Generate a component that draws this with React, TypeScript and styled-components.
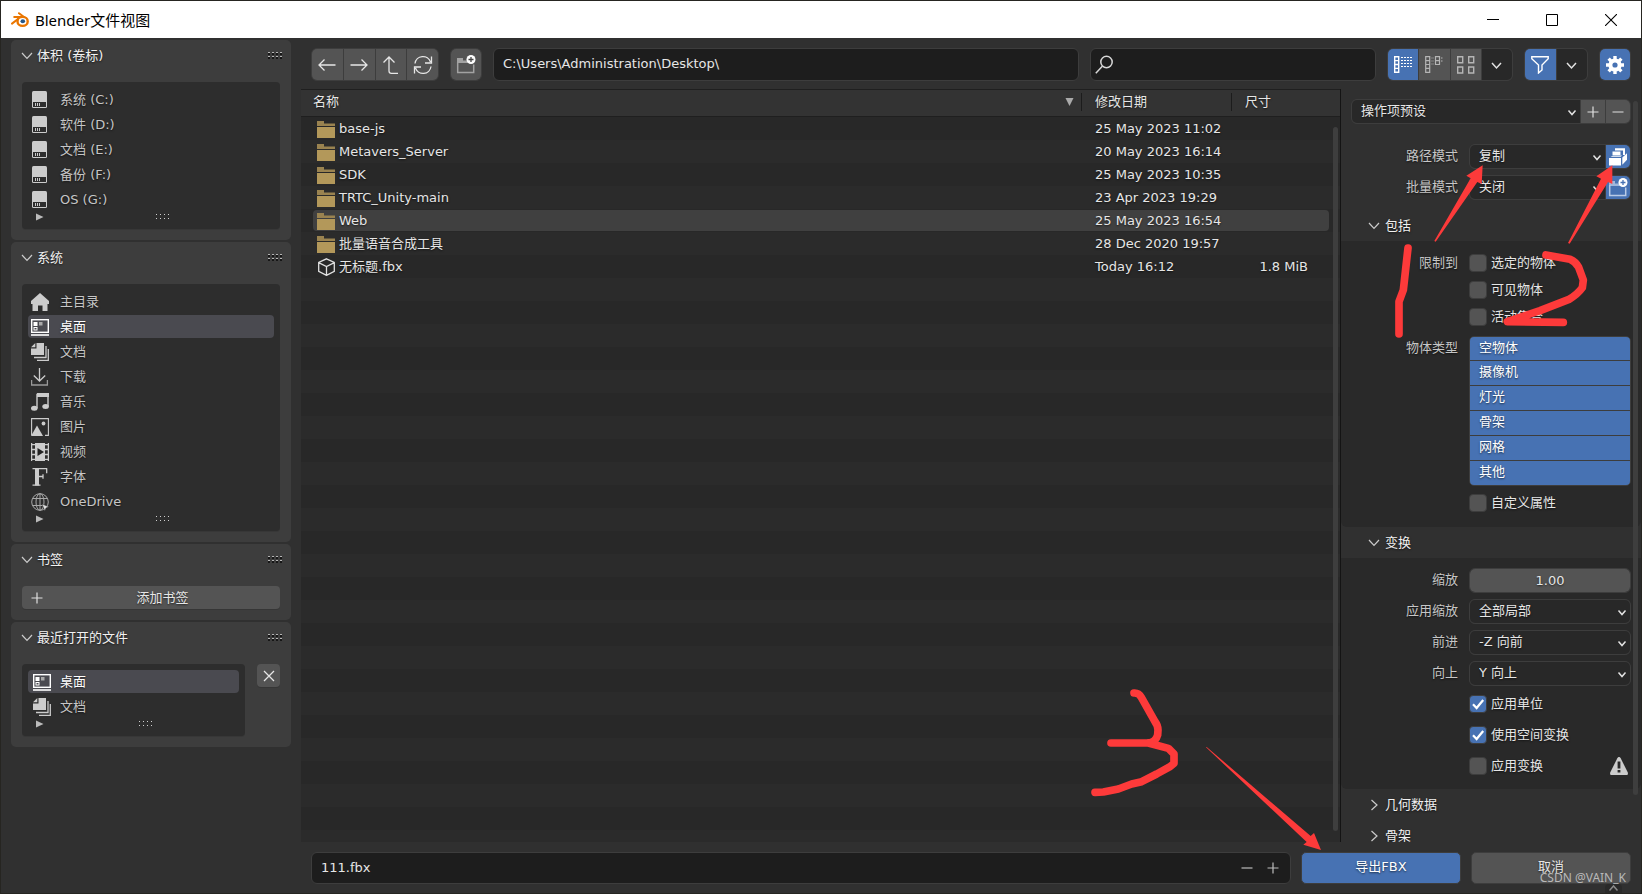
import React from "react";
import styled, { createGlobalStyle, css } from "styled-components";

const c = {
  bg: "#303030",
  panel: "#3d3d3d",
  list: "#2d2d2d",
  sub: "#292929",
  outline: "#3d3d3d",
  button: "#545454",
  field: "#1d1d1d",
  menu: "#282828",
  blue: "#4772b3",
  text: "#e6e6e6",
  dim: "#c6c6c6",
  mark: "#fd3a3a",
};

const GlobalStyle = createGlobalStyle`
  * { box-sizing: border-box; }
  body {
    margin: 0;
    background: ${c.bg};
    overflow: hidden;
  }
  body, button, input, select, table {
    font-family: "DejaVu Sans", "Noto Sans CJK SC", sans-serif;
    font-size: 13px;
    line-height: 20px;
    color: ${c.text};
  }
  button, input, select { border: 0; padding: 0; margin: 0; border-radius: 0; }
  ul { list-style: none; margin: 0; padding: 0; }
`;

const shadow = css`
  text-shadow: 0 1px 2px rgba(0, 0, 0, 0.6);
`;

const Window = styled.div`
  position: relative;
  display: flex;
  flex-direction: column;
  height: 100vh;
  padding: 1px;
  background: #262521;
`;

const TitleBar = styled.header`
  display: flex;
  align-items: center;
  flex: 0 0 37px;
  padding: 0 1px 0 10px;
  background: #fff;
`;

const Title = styled.h1`
  flex: 1;
  margin: 0 0 0 6px;
  font: 400 15px/20px "Noto Sans", "Noto Sans CJK SC", sans-serif;
  color: #000;
`;

const CaptionButton = styled.button`
  display: flex;
  align-items: center;
  justify-content: center;
  width: 59px;
  height: 36px;
  background: none;
`;

const Body = styled.div`
  display: flex;
  flex: 1;
  min-height: 0;
  background: ${c.bg};
`;

const Sidebar = styled.aside`
  display: flex;
  flex-direction: column;
  gap: 2px;
  flex: 0 0 300px;
  padding: 2px 10px;
`;

const Panel = styled.section`
  padding: 0 11px 11px;
  border-radius: 5px;
  background: ${c.panel};
`;

const PanelHeader = styled.button`
  display: flex;
  align-items: center;
  width: 100%;
  height: 32px;
  margin-bottom: 10px;
  padding: 0;
  background: none;
  color: #f2f2f2;
  ${shadow}
  span { flex: 1; margin-left: 4px; text-align: left; }
  svg:first-child { margin-left: -1px; }
  svg:last-child { margin-right: -3px; }
`;

const ListBox = styled.div`
  flex: 1;
  padding: 5px 6px 0;
  border-radius: 4px;
  background: ${c.list};
  box-shadow: 0 1px 0 #373737;
  li { padding: 1px 0; }
`;

const Place = styled.button<{ $active?: boolean; $inset?: boolean }>`
  display: flex;
  align-items: center;
  gap: ${(p) => (p.$inset ? 9 : 11)}px;
  width: 100%;
  height: 23px;
  padding-left: ${(p) => (p.$inset ? 5 : 3)}px;
  border-radius: 4px;
  background: ${(p) => (p.$active ? "#4a4a50" : "none")};
  color: ${(p) => (p.$active ? "#fff" : c.dim)};
  ${shadow}
`;

const ListFooter = styled.div`
  display: grid;
  grid-template-columns: 24px 1fr;
  justify-items: center;
  align-items: start;
  height: 17px;
  padding-top: 1px;
`;

const SplitRow = styled.div`
  display: flex;
  align-items: flex-start;
  gap: 12px;
`;

const AddBookmark = styled.button`
  display: grid;
  grid-template-columns: 22px 1fr;
  align-items: center;
  width: 100%;
  height: 23px;
  padding: 0 8px 0 9px;
  border-radius: 4px;
  background: ${c.button};
  box-shadow: 0 1px 0 #363636;
  ${shadow}
`;

const ClearButton = styled.button`
  display: flex;
  align-items: center;
  justify-content: center;
  width: 23px;
  height: 23px;
  border-radius: 4px;
  background: ${c.button};
  box-shadow: 0 1px 0 #363636;
`;

const Main = styled.main`
  display: flex;
  flex-direction: column;
  flex: 1;
  min-width: 0;
`;

const Toolbar = styled.div`
  display: flex;
  gap: 11px;
  flex: 0 0 51px;
  padding: 10px 10px 0;
`;

const Group = styled.div<{ $width?: number; $height?: number }>`
  display: flex;
  gap: 1px;
  ${(p) => p.$width && `flex: 0 0 ${p.$width}px;`}
  height: ${(p) => p.$height ?? 33}px;
  border: 1px solid ${c.outline};
  border-radius: 6px;
  background: ${c.outline};
  overflow: hidden;
`;

const Tool = styled.button<{ $tone?: "blue" | "menu"; $width?: number }>`
  display: flex;
  align-items: center;
  justify-content: center;
  flex: ${(p) => (p.$width ? `0 0 ${p.$width}px` : "1")};
  background: ${(p) => (p.$tone === "blue" ? c.blue : p.$tone === "menu" ? c.menu : c.button)};
`;

const TextBox = styled.div<{ $width?: number; $height?: number }>`
  display: flex;
  align-items: center;
  gap: 4px;
  flex: ${(p) => (p.$width ? `0 0 ${p.$width}px` : "1")};
  height: ${(p) => p.$height ?? 33}px;
  padding: 0 6px 0 4px;
  border: 1px solid ${c.outline};
  border-radius: 6px;
  background: ${c.field};
  input {
    flex: 1;
    min-width: 0;
    height: 28px;
    padding: 0 4px 2px 5px;
    background: none;
    outline: 0;
  }
`;

const StepButton = styled.button`
  display: flex;
  align-items: center;
  justify-content: center;
  width: 22px;
  height: 26px;
  background: none;
`;

const Middle = styled.div`
  display: flex;
  flex: 1;
  min-height: 0;
`;

const Files = styled.div`
  position: relative;
  flex: 1;
  min-width: 0;
  overflow: hidden;
  border-right: 1px solid #141414;
  background: repeating-linear-gradient(#282828 0 23px, #2b2b2b 23px 46px) 0 28px;
`;

const FileTable = styled.table`
  width: 100%;
  table-layout: fixed;
  border-collapse: separate;
  border-spacing: 0;
  ${shadow}
  th {
    height: 28px;
    padding: 0 0 2px;
    border-top: 1px solid #1f1f1f;
    border-bottom: 1px solid #1f1f1f;
    background: #333;
    font-weight: 400;
    text-align: left;
  }
  td { height: 23px; padding: 0; }
  td:first-child > div { display: flex; align-items: center; gap: 4px; padding-left: 16px; }
  td:nth-child(2) { padding-left: 14px; }
  td:nth-child(3) { padding-right: 32px; text-align: right; }
`;

const HeadCell = styled.div<{ $divided?: boolean }>`
  display: flex;
  align-items: center;
  justify-content: space-between;
  height: 18px;
  padding: 0 7px 0 ${(p) => (p.$divided ? 13 : 12)}px;
  border-left: ${(p) => (p.$divided ? "1px solid #1c1c1c" : "0")};
`;

const FileRow = styled.tr<{ $active?: boolean }>`
  position: relative;
  z-index: 0;
  ${(p) =>
    p.$active &&
    css`
      td:first-child::before {
        content: "";
        position: absolute;
        z-index: -1;
        inset: 1px 11px 1px 12px;
        border-radius: 4px;
        background: #404040;
      }
    `}
`;

const Thumb = styled.div<{ $top: number; $bottom: number; $right: number }>`
  position: absolute;
  top: ${(p) => p.$top}px;
  bottom: ${(p) => p.$bottom}px;
  right: ${(p) => p.$right}px;
  width: 5px;
  border-radius: 3px;
  background: #3e3e3e;
`;

const Settings = styled.aside`
  position: relative;
  flex: 0 0 300px;
  overflow: hidden;
`;

const Preset = styled.div`
  padding: 10px 10px 20px;
`;

const Fields = styled.div`
  display: flex;
  flex-direction: column;
  gap: 6px;
  padding-bottom: 10px;
`;

const FieldRow = styled.div`
  display: grid;
  grid-template-columns: 117px 1fr;
  column-gap: 11px;
  padding-right: 10px;
`;

const FieldLabel = styled.label`
  line-height: 24px;
  text-align: right;
  color: ${c.dim};
  ${shadow}
`;

const SelectWrap = styled.div`
  position: relative;
  display: flex;
  flex: 1;
  background: ${c.menu};
  select {
    flex: 1;
    min-width: 0;
    padding: 0 24px 1px 9px;
    appearance: none;
    background: none;
    outline: 0;
    ${shadow}
  }
  svg {
    position: absolute;
    right: 2px;
    top: 6px;
    pointer-events: none;
  }
`;

const NumberInput = styled.input`
  flex: 1;
  min-width: 0;
  background: ${c.button};
  text-align: center;
  ${shadow}
`;

const SectionHeader = styled.button`
  display: flex;
  align-items: center;
  gap: 5px;
  width: 100%;
  height: 31px;
  padding-left: 27px;
  background: none;
  color: #f0f0f0;
  ${shadow}
`;

const SectionBody = styled.div<{ $gap?: number }>`
  display: flex;
  flex-direction: column;
  gap: ${(p) => p.$gap ?? 0}px;
  padding: ${(p) => (p.$gap ? 10 : 9)}px 0 10px;
  border-radius: 0 0 6px 6px;
  background: ${c.sub};
`;

const CheckRow = styled.div<{ $height: number }>`
  display: grid;
  grid-template-columns: 117px 1fr 18px;
  column-gap: 11px;
  align-items: center;
  height: ${(p) => p.$height}px;
  padding: 0 13px 1px 0;
  > span { text-align: right; color: ${c.dim}; ${shadow} }
`;

const Check = styled.label`
  position: relative;
  display: flex;
  align-items: center;
  gap: 4px;
  white-space: nowrap;
  ${shadow}
  input {
    appearance: none;
    width: 18px;
    height: 18px;
    border: 1px solid ${c.outline};
    border-radius: 4px;
    background: ${c.button};
  }
  input:checked { background: ${c.blue}; }
  svg { position: absolute; left: 0; top: 1px; visibility: hidden; pointer-events: none; }
  input:checked + svg { visibility: visible; }
`;

const TypeRow = styled(FieldRow)`
  margin: 5px 0 4px;
`;

const TypeList = styled.div`
  display: flex;
  flex-direction: column;
  gap: 1px;
  border: 1px solid ${c.outline};
  border-radius: 5px;
  background: ${c.outline};
  overflow: hidden;
`;

const TypeButton = styled.button`
  height: 24px;
  padding: 0 0 2px 9px;
  background: ${c.blue};
  color: #fff;
  text-align: left;
  ${shadow}
  &:first-child { height: 23px; }
`;

const BottomBar = styled.footer`
  position: relative;
  display: flex;
  gap: 10px;
  flex: 0 0 51px;
  padding: 10px 10px 0;
`;

const ActionButton = styled.button<{ $primary?: boolean }>`
  flex: 0 0 160px;
  height: 32px;
  padding-bottom: 2px;
  border: 1px solid ${c.outline};
  border-radius: 5px;
  background: ${(p) => (p.$primary ? c.blue : c.button)};
  color: ${(p) => (p.$primary ? "#fff" : c.text)};
  ${shadow}
`;

const Watermark = styled.span`
  position: absolute;
  right: 15px;
  bottom: 5px;
  font: 400 12px/20px "Noto Sans", sans-serif;
  color: #b9b9b9;
`;

const CornerTab = styled.span`
  position: absolute;
  right: 19px;
  bottom: 0;
  display: flex;
  justify-content: center;
  width: 17px;
  height: 9px;
  border-radius: 4px 4px 0 0;
  background: #292929;
`;

const Marks = styled.svg<{ $right: number }>`
  position: absolute;
  right: ${(p) => p.$right}px;
  fill: ${c.mark};
  pointer-events: none;
  path { fill: none; stroke: ${c.mark}; stroke-width: 23; stroke-linecap: round; stroke-linejoin: round; }
`;
const TopMarks = styled(Marks)`top: 90px;`;
const BottomMarks = styled(Marks)`bottom: 0;`;

type IconProps = { children: React.ReactNode; size?: number; color?: string; w?: number; h?: number };
const Icon = ({ children, size = 18, color = "#cccccc", w, h }: IconProps) => (
  <svg width={w ?? size} height={h ?? size} viewBox={`0 0 ${w ?? size} ${h ?? size}`} fill="none" stroke={color} strokeWidth="1.3" aria-hidden="true">
    {children}
  </svg>
);

const BlenderLogo = () => (
  <Icon w={18} h={16}>
    <path d="M1 11.6 9.6 5H3.2M8 1.2l6 4.6" stroke="#ea7600" strokeWidth="2" strokeLinecap="round" />
    <ellipse cx="11.6" cy="9.4" rx="5.1" ry="4.5" fill="#fff" stroke="#ea7600" strokeWidth="2.4" />
    <ellipse cx="11.8" cy="9.2" rx="2.3" ry="2" fill="#265787" stroke="none" />
  </Icon>
);
const ChevronDown = () => <Icon w={12} h={8}><path d="m1 1 5 5.4L11 1" strokeWidth="1.2" /></Icon>;
const ChevronRight = () => <Icon w={12} h={12}><path d="m3.500 1 5.500 5-5.500 5" strokeWidth="1.2" /></Icon>;
const Caret = ({ size = 12 }: { size?: number }) => (
  <Icon size={size} color="#e2e2e2"><path d={size > 12 ? "m3 6 4.500 5L12 6" : "m2.500 4.500 3.500 4 3.500-4"} strokeWidth="1.5" /></Icon>
);
const Plus = ({ color = "#e0e0e0" }) => <Icon size={12} color={color}><path d="M6 .5v11M.5 6h11" strokeWidth="1.2" /></Icon>;
const Minus = ({ color = "#e0e0e0" }) => <Icon size={12} color={color}><path d="M.5 6h11" strokeWidth="1.2" /></Icon>;

const Grip = () => (
  <Icon w={16} h={8}>
    {[0, 4, 8, 12].flatMap((x) => [0, 4].map((y) => (
      <g key={`${x}-${y}`} stroke="none">
        <rect x={x + 1} y={y} width="2" height="1" fill="#b5b5b5" />
        <rect x={x + 1} y={y + 1} width="2" height="2" fill="#161616" />
      </g>
    )))}
  </Icon>
);
const FootGrip = () => (
  <Icon w={14} h={8}>
    {[0, 4, 8, 12].flatMap((x) => [1, 5].map((y) => (
      <rect key={`${x}-${y}`} x={x} y={y} width="1" height="1" fill="#d0d0d0" stroke="none" />
    )))}
  </Icon>
);

const Drive = () => (
  <Icon>
    <rect x="1" y="0" width="15" height="17" rx="1.5" fill="#ccc" stroke="none" />
    <path d="M2 11h13v5H2z" fill="#2d2d2d" stroke="none" />
    <path d="M4.500 12v3M6.500 12v3M8.500 12v3" strokeWidth="1" />
  </Icon>
);
const Home = () => (
  <Icon><path d="M9 0 0 8v3h1.500v7H7v-5.500h4.500V18h5v-7H18V8z" fill="#ccc" stroke="none" /></Icon>
);
const Desktop = () => (
  <Icon color="#fff">
    <rect x=".7" y="1.700" width="16.600" height="12.600" strokeWidth="1.4" />
    <path d="M0 17h18" strokeWidth="1.6" />
    <rect x="2.500" y="4" width="4" height="4" fill="#fff" stroke="none" />
    <rect x="8" y="4" width="3.500" height="3.500" fill="#aaa" stroke="none" />
    <rect x="3" y="9.500" width="3" height="2.500" strokeWidth="1" />
  </Icon>
);
const Documents = () => (
  <Icon>
    <path d="M5.500 0H13v12H0V5.500h5.500z" fill="#ccc" stroke="none" />
    <path d="M0 4.300 4.300 0v4.300z" fill="#ccc" stroke="none" />
    <path d="M15 3v11.500H3M17.300 6v11.300H6" strokeWidth="1.3" />
  </Icon>
);
const Download = () => (
  <Icon><path d="M8.500 0v13M2.800 7.500l5.700 5.500 5.700-5.500" /><path d="M.6 12v5h15.800v-5" stroke="#999" /></Icon>
);
const Music = () => (
  <Icon>
    <path d="M6 15V1.500h11V13" strokeWidth="1.4" />
    <path d="M6 0h12v4H6z" fill="#ccc" stroke="none" />
    <ellipse cx="3.300" cy="15.300" rx="3.300" ry="2.500" fill="#ccc" stroke="none" />
    <ellipse cx="14.600" cy="13.500" rx="3.300" ry="2.500" fill="#ccc" stroke="none" />
  </Icon>
);
const Picture = () => (
  <Icon>
    <path d="M.6 17.300V.6h16.800v16.800H14" strokeWidth="1.1" />
    <path d="M0 18 6 7.500 12 18z" fill="#ccc" stroke="none" />
    <circle cx="12.500" cy="5.500" r="1.900" fill="#ccc" stroke="none" />
  </Icon>
);
const Movie = () => (
  <Icon>
    <path d="M4 0h10v18H4z" fill="#ccc" stroke="none" />
    <path d="M.6 0v18M17.400 0v18M0 1.600h4M0 6.500h4M0 11.500h4M0 16.400h4M14 1.600h4M14 6.500h4M14 11.500h4M14 16.400h4" />
    <path d="m6.500 5 6.500 4-6.500 4z" fill="#222" stroke="none" />
  </Icon>
);
const FontIcon = () => (
  <Icon>
    <path d="M1.500.7H16M15.700.3v5M1.500 17.200h8M6 8.500h6M12 6.200v4.600" strokeWidth="1.300" />
    <path d="M4 .5h4v17H4z" fill="#ccc" stroke="none" />
  </Icon>
);
const Globe = () => (
  <Icon color="#a8a8a8">
    <circle cx="9" cy="9" r="8.300" strokeWidth="1" />
    <ellipse cx="9" cy="9" rx="4" ry="8.300" strokeWidth="1" />
    <path d="M1.500 5.500h15M1.500 12.500H13M9 .7v16.600" strokeWidth="1" />
    <path d="m11 11 7 2.800-3 1.200-1.200 3z" fill="#ddd" stroke="#2d2d2d" strokeWidth=".5" />
  </Icon>
);
const Folder = () => (
  <Icon>
    <path d="M0 1h7v2.500h11v2.500H0z" fill="#9a8350" stroke="none" />
    <path d="M0 7h18v11H0z" fill="#b3985a" stroke="none" />
  </Icon>
);
const Cube = () => (
  <Icon color="#e0e0e0"><path d="m9.500.8 7.800 3.600v9l-7.800 4-7.800-4v-9zM1.700 4.600l7.800 4 7.800-4M9.500 8.600v8.800" /></Icon>
);
const NewFolder = ({ dark = true }) => (
  <Icon size={20} color={dark ? "#a2a2a2" : "#b9cbe6"}>
    <path d="M1 3h6v2.500h5V8H1z" fill={dark ? "#a2a2a2" : "#9fb7dc"} stroke="none" />
    <path d="M1.700 7v10.500h16V9.500" strokeWidth="1.500" />
    <circle cx="15" cy="4.500" r="4.500" fill="#fff" stroke="none" />
    <path d="M15 2v5M12.500 4.500h5" stroke={dark ? "#444" : c.blue} strokeWidth="1.300" />
  </Icon>
);
const Magnifier = () => (
  <Icon size={20} color="#d8d8d8"><circle cx="11.500" cy="7" r="5.700" strokeWidth="1.500" /><path d="m7.300 11.200-6.500 7" strokeWidth="1.500" /></Icon>
);
const ViewList = () => (
  <Icon color="#fff">
    <path d="M.7.700h4v15.600h-4zM.7 4.600h4M.7 8.500h4M.7 12.400h4" strokeWidth="1.400" />
    <path d="M7 1.500h11M7 4.500h11M7 7.500h11M7 10.500h11" strokeWidth="1" strokeDasharray="2 1" />
  </Icon>
);
const ViewColumns = () => (
  <Icon color="#b5b5b5">
    <path d="M.7.700h4v15.600h-4zM.7 4.600h4M.7 8.500h4M.7 12.400h4M10.500.700h4v7.800h-4zM10.500 4.600h4" strokeWidth="1.200" />
    <path d="M6.500 2h2M6.500 5h2M6.500 8h2M16 2h2M16 5h2" strokeWidth="1" strokeDasharray="1 .5" />
  </Icon>
);
const ViewGrid = () => (
  <Icon color="#b5b5b5"><path d="M.7.700h5v6h-5zM11.700.700h5v6h-5zM.7 11h5v6h-5zM11.700 11h5v6h-5z" strokeWidth="1.400" /></Icon>
);
const Funnel = () => (
  <Icon color="#fff"><path d="M.8.800h16.400v2L11 9v5l-3.500 3V9L.8 2.800z" strokeWidth="1.400" /></Icon>
);
const Gear = () => (
  <Icon>
    <g stroke="#fff">
      <circle cx="9" cy="9" r="4.600" strokeWidth="4" />
      {[0, 45, 90, 135, 180, 225, 270, 315].map((a) => (
        <path key={a} d="M9 0v3.500" strokeWidth="3.400" transform={`rotate(${a} 9 9)`} />
      ))}
    </g>
  </Icon>
);
const CopyFiles = () => (
  <Icon>
    <g fill="#fff" stroke="none">
      <path d="M0 10h12v7.500H0zM1.500 8.700 4 7.500h9l-1.500 1.200zM3.500 3.500h8V7h-8zM6 .3h10V7h-2V2.500H6z" />
      <path d="m13.300 9.500 4.700-4.300v6.500l-4.700 5z" />
    </g>
  </Icon>
);
const Warning = () => (
  <Icon>
    <path d="M9 0c.9 0 1.300.6 1.700 1.300l7 14c.6 1.400 0 2.700-1.200 2.700h-15C.3 18-.3 16.700.3 15.300l7-14C7.700.6 8.100 0 9 0z" fill="#ccc" stroke="none" />
    <path d="M7.600 4.500h2.800v7H7.600zM7.600 13h2.800v2.500H7.600z" fill="#292929" stroke="none" />
  </Icon>
);
const PlayMark = () => <Icon w={8} h={8}><path d="M0 .5 7.500 4 0 7.500z" fill="#bbb" stroke="none" /></Icon>;
const Tick = () => <Icon color="#fff"><path d="m4 9.300 3.600 3.700 6.600-8" strokeWidth="2.200" /></Icon>;

type PlaceItem = { label: string; icon: React.ReactNode; active?: boolean };

const volumes = ["系统 (C:)", "软件 (D:)", "文档 (E:)", "备份 (F:)", "OS (G:)"].map((label) => ({ label, icon: <Drive /> }));
const system: PlaceItem[] = [
  { label: "主目录", icon: <Home /> },
  { label: "桌面", icon: <Desktop />, active: true },
  { label: "文档", icon: <Documents /> },
  { label: "下载", icon: <Download /> },
  { label: "音乐", icon: <Music /> },
  { label: "图片", icon: <Picture /> },
  { label: "视频", icon: <Movie /> },
  { label: "字体", icon: <FontIcon /> },
  { label: "OneDrive", icon: <Globe /> },
];
const recent: PlaceItem[] = [
  { label: "桌面", icon: <Desktop />, active: true },
  { label: "文档", icon: <Documents /> },
];
const files = [
  { name: "base-js", date: "25 May 2023 11:02" },
  { name: "Metavers_Server", date: "20 May 2023 16:14" },
  { name: "SDK", date: "25 May 2023 10:35" },
  { name: "TRTC_Unity-main", date: "23 Apr 2023 19:29" },
  { name: "Web", date: "25 May 2023 16:54", active: true },
  { name: "批量语音合成工具", date: "28 Dec 2020 19:57" },
  { name: "无标题.fbx", date: "Today 16:12", size: "1.8 MiB" },
];

const Places = ({ items, inset }: { items: PlaceItem[]; inset?: boolean }) => (
  <ListBox>
    <ul>
      {items.map((it) => (
        <li key={it.label}>
          <Place $active={it.active} $inset={inset}>{it.icon}{it.label}</Place>
        </li>
      ))}
    </ul>
    <ListFooter><PlayMark /><FootGrip /></ListFooter>
  </ListBox>
);

const SidePanel = ({ title, children }: { title: string; children: React.ReactNode }) => (
  <Panel>
    <PanelHeader aria-expanded="true"><ChevronDown /><span>{title}</span><Grip /></PanelHeader>
    {children}
  </Panel>
);

const Dropdown = ({ id, value, label }: { id: string; value: string; label?: string }) => (
  <SelectWrap>
    <select id={id} aria-label={label}><option>{value}</option></select>
    <Caret />
  </SelectWrap>
);

const Field = ({ id, label, children }: { id: string; label: string; children: React.ReactNode }) => (
  <FieldRow>
    <FieldLabel htmlFor={id}>{label}</FieldLabel>
    <Group $height={25}>{children}</Group>
  </FieldRow>
);

const Toggle = ({ text, label, checked, height = 25, warn }: { text: string; label?: string; checked?: boolean; height?: number; warn?: boolean }) => (
  <CheckRow $height={height}>
    <span>{label}</span>
    <Check><input type="checkbox" defaultChecked={checked} /><Tick />{text}</Check>
    {warn && <Warning />}
  </CheckRow>
);

export default function App() {
  return (
    <Window>
      <GlobalStyle />
      <TitleBar>
        <BlenderLogo />
        <Title>Blender文件视图</Title>
        <CaptionButton aria-label="最小化"><Icon size={12} color="#000"><path d="M0 5.500h12" strokeWidth="1" /></Icon></CaptionButton>
        <CaptionButton aria-label="最大化"><Icon size={12} color="#000"><path d="M.5.500h11v11H.500z" strokeWidth="1" /></Icon></CaptionButton>
        <CaptionButton aria-label="关闭"><Icon size={12} color="#000"><path d="m0 0 12 12M12 0 0 12" strokeWidth="1.100" /></Icon></CaptionButton>
      </TitleBar>
      <Body>
        <Sidebar>
          <SidePanel title="体积 (卷标)"><Places items={volumes} /></SidePanel>
          <SidePanel title="系统"><Places items={system} /></SidePanel>
          <SidePanel title="书签">
            <AddBookmark><Plus /><span>添加书签</span></AddBookmark>
          </SidePanel>
          <SidePanel title="最近打开的文件">
            <SplitRow>
              <Places items={recent} inset />
              <ClearButton aria-label="清除"><Icon size={12} color="#e6e6e6"><path d="m1 1 10 10M11 1 1 11" /></Icon></ClearButton>
            </SplitRow>
          </SidePanel>
        </Sidebar>
        <Main>
          <Toolbar>
            <Group $width={128}>
              <Tool aria-label="后退"><Icon color="#e6e6e6"><path d="M17.500 9H1M6.500 3.500 1 9l5.500 5.500" /></Icon></Tool>
              <Tool aria-label="前进"><Icon color="#e6e6e6"><path d="M.5 9H17M11.500 3.500 17 9l-5.500 5.500" /></Icon></Tool>
              <Tool aria-label="上一级"><Icon color="#e6e6e6"><path d="M1.500 6.500 7 1l5.500 5.500M7 1v14q0 2.300 2.300 2.300H16" /></Icon></Tool>
              <Tool aria-label="刷新"><Icon size={20} color="#e6e6e6"><path d="M2 8.500a8 8 0 0 1 15.500-1.500M18.500 1.500V8H12M18 11.500a8 8 0 0 1-15.500 1.500M1.500 18.500V12H8" /></Icon></Tool>
            </Group>
            <Group $width={32}><Tool aria-label="新建文件夹"><NewFolder /></Tool></Group>
            <TextBox><input aria-label="路径" defaultValue={"C:\\Users\\Administration\\Desktop\\"} /></TextBox>
            <TextBox $width={286}><Magnifier /><input aria-label="搜索" /></TextBox>
            <Group $width={126}>
              <Tool $tone="blue" aria-label="垂直列表"><ViewList /></Tool>
              <Tool aria-label="水平列表"><ViewColumns /></Tool>
              <Tool aria-label="缩略图"><ViewGrid /></Tool>
              <Tool $tone="menu" aria-label="显示设置"><Caret size={15} /></Tool>
            </Group>
            <Group $width={64}>
              <Tool $tone="blue" aria-label="过滤"><Funnel /></Tool>
              <Tool $tone="menu" aria-label="过滤设置"><Caret size={15} /></Tool>
            </Group>
            <Group $width={32}><Tool $tone="blue" aria-label="选项"><Gear /></Tool></Group>
          </Toolbar>
          <Middle>
            <Files>
              <FileTable>
                <colgroup><col /><col width="150" /><col width="109" /></colgroup>
                <thead>
                  <tr>
                    <th><HeadCell>名称<Icon w={9} h={8}><path d="M.5 0h8l-4 8z" fill="#aaa" stroke="none" /></Icon></HeadCell></th>
                    <th><HeadCell $divided>修改日期</HeadCell></th>
                    <th><HeadCell $divided>尺寸</HeadCell></th>
                  </tr>
                </thead>
                <tbody>
                  {files.map((f) => (
                    <FileRow key={f.name} $active={f.active}>
                      <td><div>{f.size ? <Cube /> : <Folder />}{f.name}</div></td>
                      <td>{f.date}</td>
                      <td>{f.size}</td>
                    </FileRow>
                  ))}
                </tbody>
              </FileTable>
              <Thumb $top={38} $bottom={11} $right={2} />
            </Files>
            <Settings>
              <Preset>
                <Group $height={25}>
                  <Dropdown id="preset" label="操作项预设" value="操作项预设" />
                  <Tool $width={24} aria-label="添加预设"><Plus /></Tool>
                  <Tool $width={24} aria-label="移除预设"><Minus /></Tool>
                </Group>
              </Preset>
              <Fields>
                <Field id="path-mode" label="路径模式">
                  <Dropdown id="path-mode" value="复制" />
                  <Tool $tone="blue" $width={24} aria-label="内嵌纹理"><CopyFiles /></Tool>
                </Field>
                <Field id="batch-mode" label="批量模式">
                  <Dropdown id="batch-mode" value="关闭" />
                  <Tool $tone="blue" $width={24} aria-label="批量自有目录"><NewFolder dark={false} /></Tool>
                </Field>
              </Fields>
              <SectionHeader aria-expanded="true"><ChevronDown />包括</SectionHeader>
              <SectionBody>
                <Toggle height={27} label="限制到" text="选定的物体" />
                <Toggle height={27} text="可见物体" />
                <Toggle height={27} text="活动集合" />
                <TypeRow>
                  <FieldLabel as="span">物体类型</FieldLabel>
                  <TypeList role="group" aria-label="物体类型">
                    {["空物体", "摄像机", "灯光", "骨架", "网格", "其他"].map((t) => (
                      <TypeButton key={t} aria-pressed="true">{t}</TypeButton>
                    ))}
                  </TypeList>
                </TypeRow>
                <Toggle height={27} text="自定义属性" />
              </SectionBody>
              <SectionHeader aria-expanded="true"><ChevronDown />变换</SectionHeader>
              <SectionBody $gap={6}>
                <Field id="scale" label="缩放"><NumberInput id="scale" defaultValue="1.00" /></Field>
                <Field id="apply-scale" label="应用缩放"><Dropdown id="apply-scale" value="全部局部" /></Field>
                <Field id="forward" label="前进"><Dropdown id="forward" value="-Z 向前" /></Field>
                <Field id="up" label="向上"><Dropdown id="up" value="Y 向上" /></Field>
                <Toggle text="应用单位" checked />
                <Toggle text="使用空间变换" checked />
                <Toggle text="应用变换" warn />
              </SectionBody>
              <SectionHeader aria-expanded="false"><ChevronRight />几何数据</SectionHeader>
              <SectionHeader aria-expanded="false"><ChevronRight />骨架</SectionHeader>
              <Thumb $top={12} $bottom={47} $right={3} />
            </Settings>
          </Middle>
          <BottomBar>
            <TextBox $height={32}>
              <input aria-label="文件名" defaultValue="111.fbx" />
              <StepButton aria-label="减少编号"><Minus color="#bdbdbd" /></StepButton>
              <StepButton aria-label="增加编号"><Plus color="#bdbdbd" /></StepButton>
            </TextBox>
            <ActionButton $primary>导出FBX</ActionButton>
            <ActionButton>取消</ActionButton>
            <CornerTab><Icon w={9} h={8} color="#8a8a8a"><path d="m.5 6.500 4-4.500 4 4.500" strokeWidth="1.500" /></Icon></CornerTab>
            <Watermark>CSDN @VAIN_K</Watermark>
          </BottomBar>
        </Main>
      </Body>
      <TopMarks $right={0} width="302" height="250" viewBox="0 0 906 750" aria-hidden="true">
        <polygon points="428,226 379,257 392,265 283,453 287,455 412,276 425,282" />
        <polygon points="817,226 769,259 783,266 684,459 689,461 804,276 817,282" />
        <path d="M204 474 190 600l-13 35v97" />
        <path d="m618 495 72 13q18 8 26 24l14 38-3 23q-14 20-40 35l-87 34-98 33 168 2" />
      </TopMarks>
      <BottomMarks $right={282} width="300" height="224" viewBox="0 0 900 672" aria-hidden="true">
        <polygon points="438,232 440,231 752,498 762,489 783,540 730,524 740,516" />
        <path d="M222 69q14-1 22 13l41 73q9 12 9 25l-1 15q-6 22-28 24H153M265 219l60 16 17 17v28l-12 10-40 22-45 23-30 7-40 15-45 9-25 1" />
      </BottomMarks>
    </Window>
  );
}
